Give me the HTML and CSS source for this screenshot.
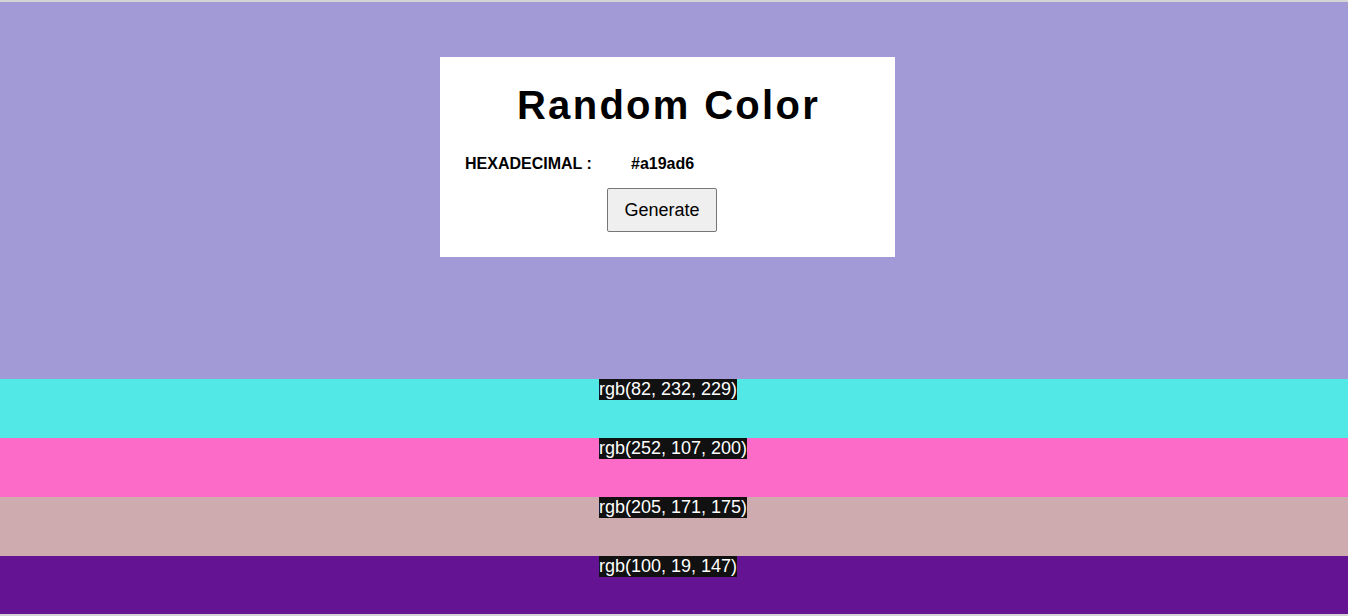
FILE: index.html
```html
<!DOCTYPE html>
<html>
<head>
<meta charset="utf-8">
<link rel="stylesheet" href="styles.css">
</head>
<body>
<div class="topline"></div>
<section class="hero">
  <div class="card">
    <h1 class="title">Random Color</h1>
    <div class="hex-row">
      <span class="hex-label">HEXADECIMAL :</span>
      <span class="hex-value">#a19ad6</span>
    </div>
    <div class="btn-row">
      <button class="btn">Generate</button>
    </div>
  </div>
</section>
<div class="strip strip-cyan"><span class="tag">rgb(82, 232, 229)</span></div>
<div class="strip strip-pink"><span class="tag">rgb(252, 107, 200)</span></div>
<div class="strip strip-tan"><span class="tag">rgb(205, 171, 175)</span></div>
<div class="strip strip-purple"><span class="tag">rgb(100, 19, 147)</span></div>
<div class="bottombar"></div>
</body>
</html>
```
FILE: styles.css
```css
html, body {
  margin: 0;
  padding: 0;
}
body {
  font-family: "Liberation Sans", Arial, sans-serif;
  background: #d4d4d4;
  overflow: hidden;
}
.topline {
  height: 2px;
  background: #d4d4d4;
}
.hero {
  height: 377px;
  background: #a19ad6;
  padding-top: 55px;
  box-sizing: border-box;
}
.card {
  width: 455px;
  height: 200px;
  margin-left: 440px;
  background: #ffffff;
  box-sizing: border-box;
  padding-top: 24px;
}
.title {
  margin: 0;
  font-size: 40px;
  line-height: 48px;
  font-weight: bold;
  letter-spacing: 2.3px;
  text-align: center;
  color: #000;
  padding-left: 2px;
}
.hex-row {
  display: flex;
  margin-top: 26px;
  padding-left: 25px;
  font-size: 16px;
  font-weight: bold;
  line-height: 18px;
  color: #000;
}
.hex-label {
  width: 166px;
}
.btn-row {
  margin-top: 15px;
  padding-left: 167px;
}
.btn {
  width: 110px;
  height: 44px;
  font-family: "Liberation Sans", Arial, sans-serif;
  font-size: 18px;
  color: #000;
  background: #efefef;
  border: 1px solid #767676;
  border-radius: 2px;
  padding: 0;
}
.strip {
  height: 59px;
  padding-left: 599px;
  box-sizing: border-box;
}
.strip-cyan { background: #52e8e5; }
.strip-pink { background: #fc6bc8; }
.strip-tan { background: #cdabaf; }
.strip-purple { background: #641393; height: 58px; }
.tag {
  display: inline-block;
  background: #111111;
  color: #ffffff;
  font-size: 18px;
  line-height: 21px;
}
.bottombar {
  height: 2px;
  background: #d4d4d4;
}
```
